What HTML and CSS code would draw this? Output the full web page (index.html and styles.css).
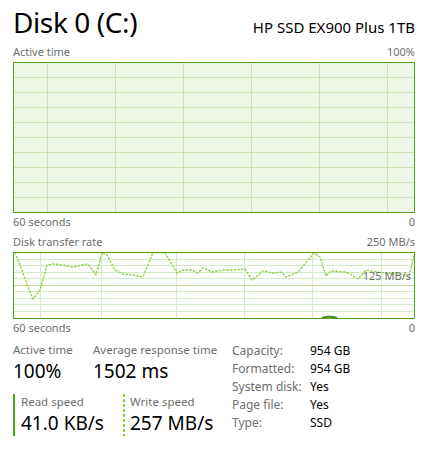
FILE: index.html
```html
<!DOCTYPE html>
<html>
<head>
<meta charset="utf-8">
<link rel="stylesheet" href="styles.css">
</head>
<body>
<div class="page">
  <div class="header">
    <div class="title">Disk 0 (C:)</div>
    <div class="model">HP SSD EX900 Plus 1TB</div>
  </div>

  <div class="axis-row top-label"><span>Active time</span><span>100%</span></div>
  <svg class="graph graph-active" width="402" height="151" viewBox="0 0 402 151">
    <rect x="0.5" y="0.5" width="401" height="150" fill="#eef6e7"/>
    <g stroke="#c9e5b4" stroke-width="1">
      <line x1="1" y1="15.5" x2="401" y2="15.5"/>
      <line x1="1" y1="30.5" x2="401" y2="30.5"/>
      <line x1="1" y1="45.5" x2="401" y2="45.5"/>
      <line x1="1" y1="60.5" x2="401" y2="60.5"/>
      <line x1="1" y1="75.5" x2="401" y2="75.5"/>
      <line x1="1" y1="90.5" x2="401" y2="90.5"/>
      <line x1="1" y1="105.5" x2="401" y2="105.5"/>
      <line x1="1" y1="120.5" x2="401" y2="120.5"/>
      <line x1="1" y1="135.5" x2="401" y2="135.5"/>
      <line x1="34.5" y1="1" x2="34.5" y2="150"/>
      <line x1="102.5" y1="1" x2="102.5" y2="150"/>
      <line x1="170.5" y1="1" x2="170.5" y2="150"/>
      <line x1="238.5" y1="1" x2="238.5" y2="150"/>
      <line x1="306.5" y1="1" x2="306.5" y2="150"/>
      <line x1="374.5" y1="1" x2="374.5" y2="150"/>
    </g>
    <rect x="0.5" y="0.5" width="401" height="150" fill="none" stroke="#52a01c" stroke-width="1"/>
  </svg>
  <div class="axis-row bottom-label"><span>60 seconds</span><span>0</span></div>

  <div class="axis-row top-label second"><span>Disk transfer rate</span><span>250 MB/s</span></div>
  <div class="graph-wrap">
    <svg class="graph graph-rate" width="402" height="67" viewBox="0 0 402 67">
      <rect x="0.5" y="0.5" width="401" height="66" fill="#ffffff"/>
      <g stroke="#d3ebc2" stroke-width="1">
        <line x1="1" y1="7.5" x2="401" y2="7.5"/>
        <line x1="1" y1="13.5" x2="401" y2="13.5"/>
        <line x1="1" y1="20.5" x2="401" y2="20.5"/>
        <line x1="1" y1="26.5" x2="401" y2="26.5"/>
        <line x1="1" y1="39.5" x2="401" y2="39.5"/>
        <line x1="1" y1="46.5" x2="401" y2="46.5"/>
        <line x1="1" y1="52.5" x2="401" y2="52.5"/>
        <line x1="1" y1="59.5" x2="401" y2="59.5"/>
        <line x1="27.5" y1="1" x2="27.5" y2="66"/>
        <line x1="88.5" y1="1" x2="88.5" y2="66"/>
        <line x1="163.5" y1="1" x2="163.5" y2="66"/>
        <line x1="231.5" y1="1" x2="231.5" y2="66"/>
        <line x1="299.5" y1="1" x2="299.5" y2="66"/>
        <line x1="368.5" y1="1" x2="368.5" y2="66"/>
      </g>
      <line x1="1" y1="33.5" x2="401" y2="33.5" stroke="#bfe0a6" stroke-width="1"/>
      <polyline fill="none" stroke="#8fd045" stroke-width="1.4" stroke-dasharray="2.5 1.2" stroke-linejoin="round"
        points="2,0.5 9,18 14,33 20,47 27,38 34,13 40,12 50,13 60,15 69,13 75,12 83,23 89,0.5 94,3 102,18 110,22 120,23 130,25 140,0.5 152,1 164,21 170,18 179,18 185,21 190,16 200,20 210,18 220,18 232,17 239,28 250,19 260,21 268,20 273,25 285,20 301,1 307,5 313,24 318,19 332,20 337,22 345,27 353,18 363,20 373,21 387,22 396,25 401,3"/>
      <path d="M309 66 Q316.5 63.5 324 66" fill="none" stroke="#3f8a14" stroke-width="2"/>
      <rect x="0.5" y="0.5" width="401" height="66" fill="none" stroke="#52a01c" stroke-width="1"/>
    </svg>
    <span class="mid-label">125 MB/s</span>
  </div>
  <div class="axis-row bottom-label"><span>60 seconds</span><span>0</span></div>

  <div class="stats">
    <div class="stats-left">
      <div class="stat-row">
        <div class="stat stat-active">
          <div class="stat-label">Active time</div>
          <div class="stat-value">100%</div>
        </div>
        <div class="stat">
          <div class="stat-label">Average response time</div>
          <div class="stat-value">1502 ms</div>
        </div>
      </div>
      <div class="stat-row speeds">
        <div class="speed speed-read">
          <div class="stat-label">Read speed</div>
          <div class="stat-value">41.0 KB/s</div>
        </div>
        <div class="speed speed-write">
          <div class="stat-label">Write speed</div>
          <div class="stat-value">257 MB/s</div>
        </div>
      </div>
    </div>
    <div class="info">
      <div class="info-label">Capacity:</div><div class="info-value">954 GB</div>
      <div class="info-label">Formatted:</div><div class="info-value">954 GB</div>
      <div class="info-label">System disk:</div><div class="info-value">Yes</div>
      <div class="info-label">Page file:</div><div class="info-value">Yes</div>
      <div class="info-label">Type:</div><div class="info-value">SSD</div>
    </div>
  </div>
</div>
</body>
</html>
```

FILE: styles.css
```css
html, body {
  margin: 0;
  padding: 0;
  background: #ffffff;
}

body {
  font-family: "Noto Sans", "Open Sans", sans-serif;
  color: #000000;
}

.page {
  width: 402px;
  padding: 4px 11px 0 13px;
}

.header {
  display: flex;
  justify-content: space-between;
  align-items: baseline;
  height: 40px;
}

.title {
  font-size: 28px;
  line-height: 36px;
  letter-spacing: -0.4px;
}

.model {
  font-size: 15px;
  line-height: 20px;
}

.axis-row {
  display: flex;
  justify-content: space-between;
  font-size: 11px;
  line-height: 16px;
  color: #6e6e6e;
}

.top-label {
  height: 18px;
}

.top-label.second {
  margin-top: 2px;
}

.bottom-label {
  height: 18px;
  padding-top: 1px;
}

.graph {
  display: block;
}

.graph-wrap {
  position: relative;
}

.mid-label {
  position: absolute;
  right: 4px;
  top: 17px;
  font-size: 11px;
  line-height: 14px;
  color: #6e6e6e;
}

.stats {
  display: flex;
  margin-top: 4px;
}

.stats-left {
  width: 219px;
}

.stat-row {
  display: flex;
}

.stat-active {
  width: 80px;
}

.stat-label {
  font-size: 11.5px;
  line-height: 16px;
  color: #6e6e6e;
}

.stat-value {
  font-size: 19px;
  line-height: 26px;
}

.speeds {
  margin-top: 10px;
}

.speed {
  padding-left: 8px;
  background-repeat: no-repeat;
  background-position: left top;
  background-size: 2px 100%;
}

.speed-read {
  width: 102px;
  background-image: linear-gradient(#4da60c, #4da60c);
}

.speed-write {
  padding-left: 7px;
  background-image: repeating-linear-gradient(to bottom, #86cf32 0 3px, transparent 3px 5px);
}

.info {
  display: grid;
  grid-template-columns: 78px auto;
  grid-auto-rows: 18px;
  font-size: 12px;
  line-height: 18px;
  align-content: start;
}

.info-label {
  color: #6e6e6e;
}

.info-value {
  color: #000000;
}
```
